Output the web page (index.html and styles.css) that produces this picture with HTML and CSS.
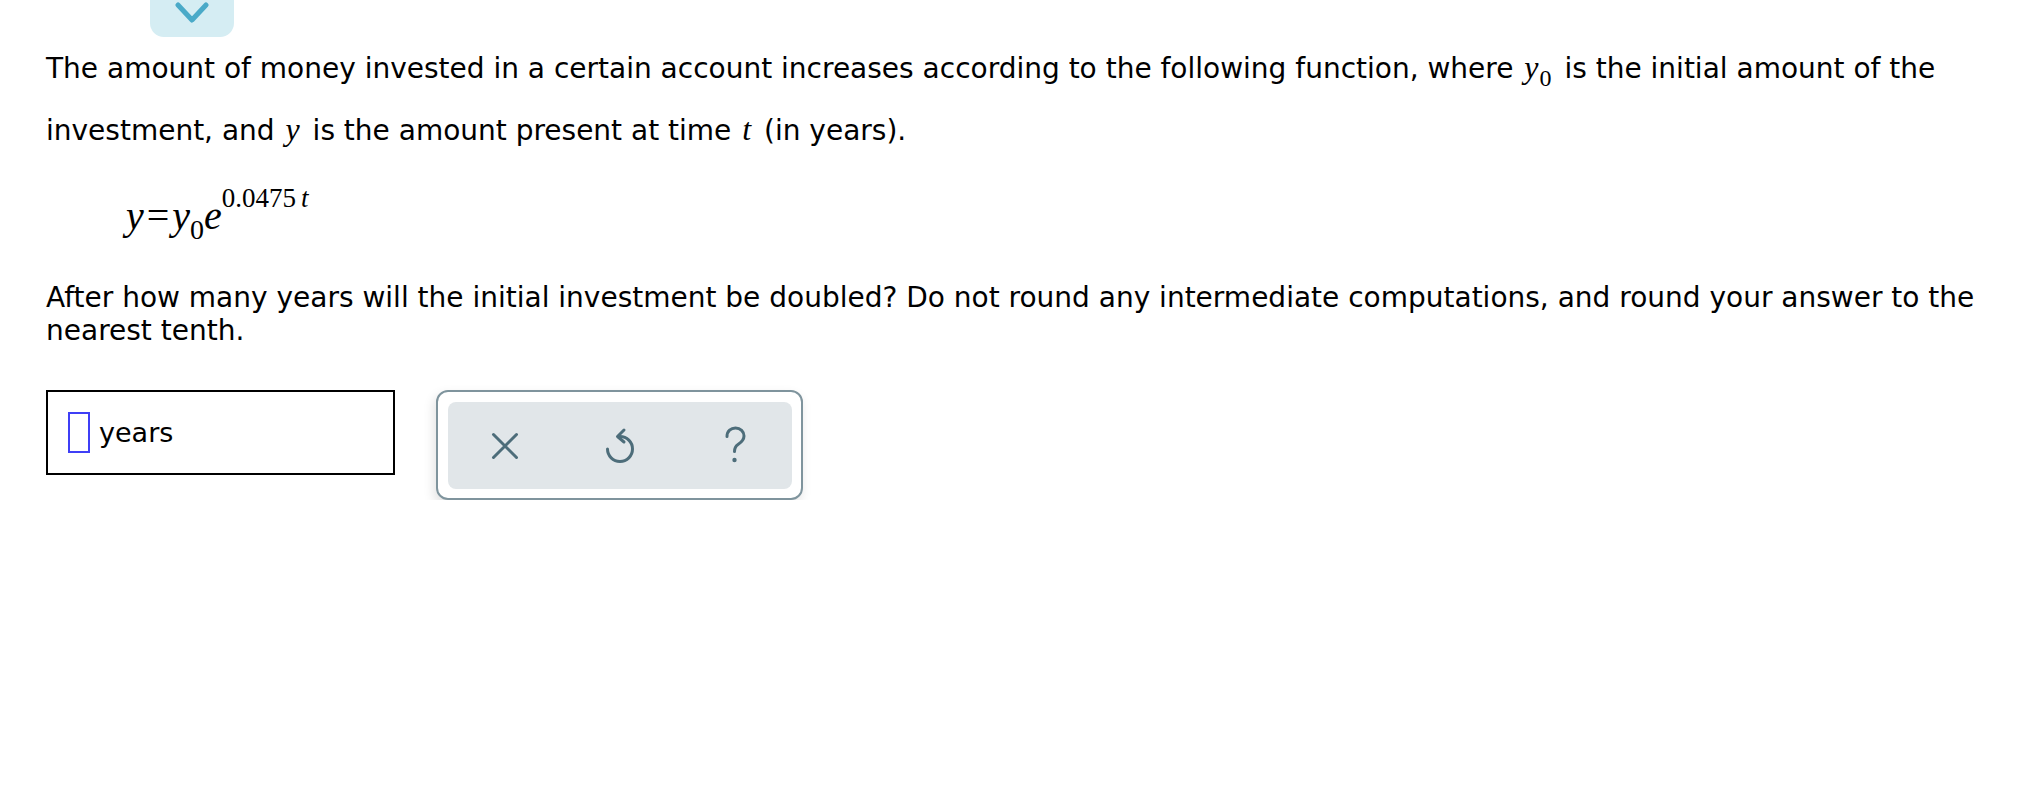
FILE: index.html
```html
<!DOCTYPE html>
<html lang="en">
<head>
<meta charset="utf-8">
<title>Question</title>
<link rel="stylesheet" href="styles.css">
</head>
<body>
<div class="page">
  <div class="top-tab">
    <svg class="chevron" width="34" height="22" viewBox="0 0 34 22"><path d="M3 3 L17 18 L31 3" fill="none" stroke="#4aaac8" stroke-width="5" stroke-linecap="round" stroke-linejoin="round"/></svg>
  </div>

  <p class="intro">The amount of money invested in a certain account increases according to the following function, where <span class="mi">y<sub class="msub">0</sub></span> is the initial amount of the investment, and <span class="mi">y</span> is the amount present at time <span class="mi">t</span> (in years).</p>

  <div class="formula"><span class="fm">y</span><span class="fo">=</span><span class="fm">y</span><span class="fsub">0</span><span class="fm">e</span><span class="fsup">0.0475<span class="fsup-t">t</span></span></div>

  <p class="question">After how many years will the initial investment be doubled? Do not round any intermediate computations, and round your answer to the nearest tenth.</p>

  <div class="answer-row">
    <div class="answer-box">
      <span class="cursor"></span>
      <span class="unit">years</span>
    </div>
    <div class="tools">
      <div class="tools-inner">
        <div class="tool">
          <svg width="40" height="40" viewBox="0 0 40 40"><path d="M8.5 8.5 L31.5 31.5 M31.5 8.5 L8.5 31.5" fill="none" stroke="#4d6d7a" stroke-width="3" stroke-linecap="round"/></svg>
        </div>
        <div class="tool">
          <svg width="40" height="40" viewBox="0 0 40 40"><path d="M7.5 23 A12.5 12.5 0 1 0 20 10.5" fill="none" stroke="#4d6d7a" stroke-width="3" stroke-linecap="round"/><path d="M24 4 L17.5 10.5 L24 16" fill="none" stroke="#4d6d7a" stroke-width="3" stroke-linecap="round" stroke-linejoin="round"/></svg>
        </div>
        <div class="tool">
          <svg width="40" height="40" viewBox="0 0 40 40"><path d="M12 10.5 C12 5 16 2 20.5 2 C25.5 2 29 5.5 29 10 C29 14.5 26 16.5 23 18.5 C20.5 20.2 19.5 22 19.5 25.5" fill="none" stroke="#4d6d7a" stroke-width="3" stroke-linecap="round"/><circle cx="19.5" cy="34" r="2.2" fill="#4d6d7a"/></svg>
        </div>
      </div>
    </div>
  </div>
</div>
</body>
</html>
```

FILE: styles.css
```css
html, body {
  margin: 0;
  padding: 0;
  background: #ffffff;
}

body {
  font-family: "DejaVu Sans", Verdana, sans-serif;
  color: #000000;
}

.page {
  padding: 0 30px 0 46px;
}

.top-tab {
  width: 84px;
  height: 37px;
  margin-left: 104px;
  background: #d5edf3;
  border-radius: 0 0 14px 14px;
  display: flex;
  justify-content: center;
  align-items: flex-start;
}

.chevron {
  margin-top: 2px;
}

.intro {
  margin: 0;
  font-size: 28px;
  line-height: 61px;
}

.mi {
  font-family: "Liberation Serif", "Times New Roman", serif;
  font-style: italic;
  font-size: 32px;
  margin: 0 4px 0 2px;
}

.msub {
  font-style: normal;
  font-size: 24px;
  line-height: 0;
  vertical-align: -8px;
  margin-left: 1px;
}

.formula {
  height: 120px;
  box-sizing: border-box;
  padding-top: 37px;
  padding-left: 80px;
  font-family: "Liberation Serif", "Times New Roman", serif;
  font-size: 40px;
  line-height: 36px;
}

.fm {
  font-style: italic;
}

.fo {
  padding: 0 3px;
}

.fsub {
  font-size: 28px;
  line-height: 0;
  vertical-align: -10px;
}

.fsup {
  font-size: 27px;
  line-height: 0;
  vertical-align: 22px;
}

.fsup-t {
  font-style: italic;
  margin-left: 5px;
}

.question {
  margin: 0;
  font-size: 28px;
  line-height: 33px;
}

.answer-row {
  display: flex;
  align-items: flex-start;
  gap: 41px;
  margin-top: 43px;
}

.answer-box {
  width: 349px;
  height: 85px;
  box-sizing: border-box;
  border: 2px solid #000000;
  display: flex;
  align-items: center;
  padding-left: 20px;
  gap: 9px;
}

.cursor {
  width: 22px;
  height: 41px;
  box-sizing: border-box;
  border: 2px solid #3f3ff6;
}

.unit {
  font-size: 27px;
}

.tools {
  width: 367px;
  height: 110px;
  box-sizing: border-box;
  border: 2px solid #7f949d;
  border-radius: 12px;
  padding: 10px 9px 9px 10px;
  background: #ffffff;
  box-shadow: -2px 5px 12px rgba(0, 0, 0, 0.12);
}

.tools-inner {
  height: 100%;
  background: #e1e6e9;
  border-radius: 8px;
  display: grid;
  grid-template-columns: repeat(3, 1fr);
  align-items: center;
  justify-items: center;
}

.tool {
  display: flex;
  align-items: center;
  justify-content: center;
}
```
